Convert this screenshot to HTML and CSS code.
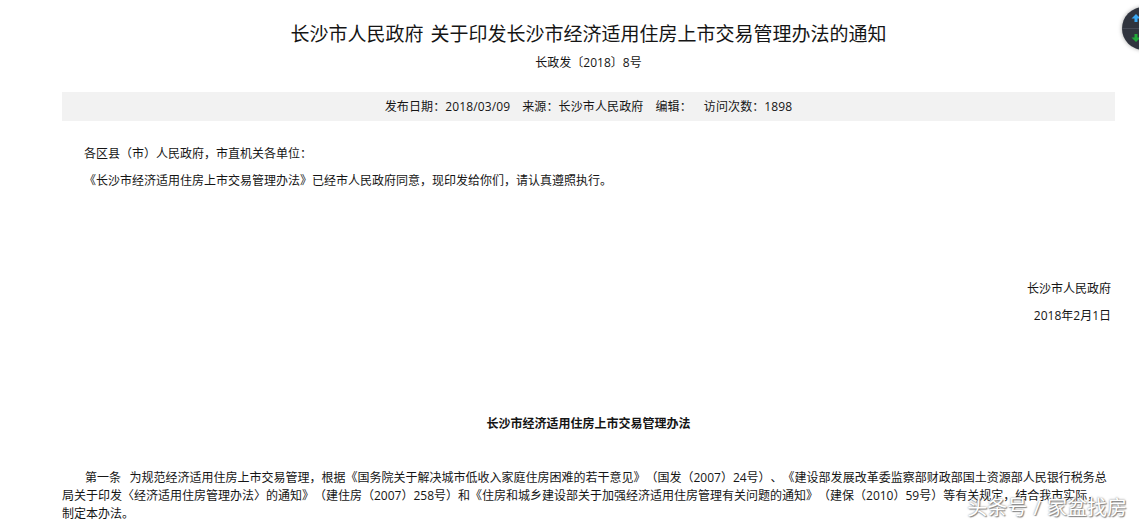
FILE: index.html
```html
<!DOCTYPE html>
<html lang="zh-CN">
<head>
<meta charset="utf-8">
<title>长沙市人民政府 关于印发长沙市经济适用住房上市交易管理办法的通知</title>
<link rel="stylesheet" href="styles.css">
</head>
<body>
<main class="page">
  <h1 class="title">长沙市人民政府 关于印发长沙市经济适用住房上市交易管理办法的通知</h1>
  <div class="docno">长政发〔2018〕8号</div>
  <div class="meta"><span>发布日期：2018/03/09</span><span>来源：长沙市人民政府</span><span>编辑：</span><span>访问次数：1898</span></div>
  <article class="content">
    <p class="greet">各区县（市）人民政府，市直机关各单位：</p>
    <p class="notice">《长沙市经济适用住房上市交易管理办法》已经市人民政府同意，现印发给你们，请认真遵照执行。</p>
    <div class="sign">
      <p>长沙市人民政府</p>
      <p>2018年2月1日</p>
    </div>
    <h2 class="subtitle">长沙市经济适用住房上市交易管理办法</h2>
    <p class="clause">第一条&nbsp;&nbsp;&nbsp;为规范经济适用住房上市交易管理，根据《国务院关于解决城市低收入家庭住房困难的若干意见》（国发（2007）24号）、《建设部发展改革委监察部财政部国土资源部人民银行税务总局关于印发〈经济适用住房管理办法〉的通知》（建住房（2007）258号）和《住房和城乡建设部关于加强经济适用住房管理有关问题的通知》（建保（2010）59号）等有关规定，结合我市实际，制定本办法。</p>
  </article>
</main>
<div class="float-btn">
  <svg class="arrows" width="12" height="28" viewBox="0 0 12 28" aria-hidden="true">
    <path d="M6 0 L1.5 4.5 H4.5 V8 H7.5 V4.5 H10.5 Z" fill="#3aa7f2"/>
    <path d="M6 28 L1.5 23.5 H4.5 V20 H7.5 V23.5 H10.5 Z" fill="#22a83a"/>
  </svg>
  <span class="divider"></span>
</div>
<div class="watermark">头条号 / 家盆找房</div>
</body>
</html>
```
FILE: styles.css
```css
html, body { margin: 0; padding: 0; background: #fff; }
body {
  width: 1139px;
  height: 526px;
  overflow: hidden;
  position: relative;
  color: #151515;
  font-family: "Open Sans", "Noto Sans CJK SC", sans-serif;
  font-size: 12px;
  text-spacing-trim: space-all;
}
.page { margin: 0 24px 0 62px; }
.title {
  margin: 0;
  padding-top: 20px;
  font-size: 19px;
  font-weight: 400;
  line-height: 28px;
  text-align: center;
  word-spacing: 2px;
}
.docno {
  margin-top: 5px;
  line-height: 20px;
  text-align: center;
}
.meta {
  margin-top: 19px;
  height: 29px;
  box-sizing: border-box;
  padding-bottom: 2px;
  background: #f2f2f2;
  display: flex;
  justify-content: center;
  align-items: center;
  gap: 12px;
  letter-spacing: .12px;
}
.content p { margin: 0; }
.greet { padding: 24px 0 0 22px; line-height: 18px; }
.notice { padding: 9px 0 0 22px; line-height: 18px; }
.sign { margin-top: 85px; padding-right: 4px; text-align: right; line-height: 27px; }
.subtitle {
  margin: 86px 0 0;
  font-size: 12px;
  font-weight: 700;
  line-height: 18px;
  text-align: center;
}
.content .clause { margin-top: 36px; padding-right: 4px; text-indent: 23px; line-height: 18px; word-spacing: -.3px; }
.float-btn {
  position: absolute;
  top: 7px;
  left: 1122px;
  width: 43px;
  height: 43px;
  border-radius: 50%;
  background: #30343e;
  box-shadow: 0 0 4px rgba(0,0,0,.35);
}
.arrows { position: absolute; left: 8px; top: 7px; }
.divider {
  position: absolute;
  left: 0;
  right: 0;
  top: 21px;
  height: 1px;
  background: #454955;
}
.watermark {
  position: absolute;
  right: 12px;
  bottom: 6px;
  font-size: 20px;
  line-height: 24px;
  color: #fff;
  word-spacing: 1px;
  text-shadow: 0 0 2px #777, 1px 1px 1px #888;
}
```
